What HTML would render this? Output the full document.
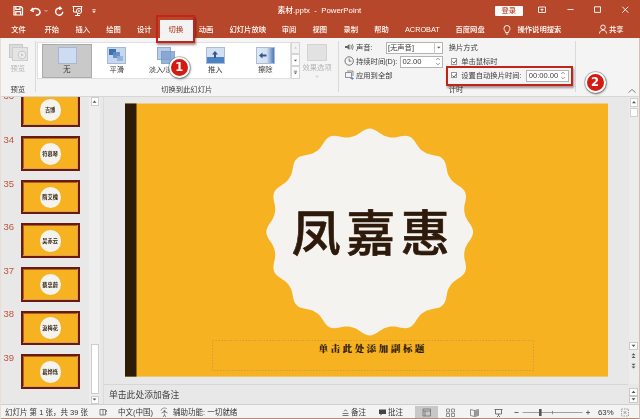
<!DOCTYPE html>
<html><head><meta charset="utf-8">
<style>
*{box-sizing:border-box;margin:0;padding:0}
html,body{width:640px;height:419px;overflow:hidden;background:#e8e8e8;font-family:"Liberation Sans","Noto Sans CJK SC",sans-serif;}
.abs{position:absolute}
#title,#ribbon,#panel,#status{will-change:transform}
#title{left:0;top:0;width:640px;height:38px;background:#b7472a}
.t{position:absolute;color:#fff;font-weight:500;font-size:7.3px;white-space:nowrap;line-height:10px}
.tab{color:#fff}
#ribbon{left:0;top:38px;width:640px;height:58.6px;background:#f4f4f4;border-bottom:1px solid #d6d6d6}
.rl{position:absolute;font-size:7.3px;color:#3a3a3a;white-space:nowrap;line-height:10px}
.gl{position:absolute;font-size:7.5px;color:#333;white-space:nowrap;line-height:10px}
#panel{left:0;top:97px;width:104px;height:307px;background:#e8e8e8}
.num{position:absolute;left:3.5px;font-size:9.5px;margin-top:0.5px;color:#bf5236;line-height:10px}
.th{position:absolute;left:21.3px;width:58.6px;height:34.5px;margin-top:0.3px;background:#f6b221;border:2px solid #6a1a10;box-shadow:inset -1px -1px 0 #dca348,inset 1px 1px 0 #a8641c}
.th i{position:absolute;left:16.6px;top:4.7px;width:21.6px;height:21.6px;border-radius:50%;background:#f4f3ee}
.th b{position:absolute;left:-0.5px;width:100%;top:11.6px;text-align:center;font-size:5.2px;line-height:8px;color:#2b1a0c;font-weight:bold}
#status{left:0;top:404px;width:640px;height:15px;background:#f3f3f3;border-top:1px solid #cfcfcf}
.st{position:absolute;font-size:7.5px;color:#333;top:3px;white-space:nowrap;line-height:10px}
.ann{position:absolute;width:21px;height:21px;border-radius:50%;background:#d51a14;border:2.4px solid #fff;box-shadow:0 0 0 0.7px rgba(90,90,90,.45),0.6px 1.2px 2.2px rgba(0,0,0,.5);color:#fff;font-weight:bold;font-size:11.5px;line-height:17.8px;text-align:center;font-family:"DejaVu Sans","Liberation Sans",sans-serif}
</style></head><body>
<div id="title" class="abs">
<svg class="abs" style="left:0;top:0" width="640" height="38" viewBox="0 0 640 38" fill="none" stroke="#fff" stroke-width="1">
 <path d="M14,6.500 h7 l1.500,1.500 v7 h-8.500 z M15.800,6.500 v2.800 h4.200 v-2.800 M15.800,15 v-3.300 h4.800 v3.300" stroke-width="1.200"/>
 <path d="M33,8 l-2,2.5 l3,1 M31.3,10.3 c2,-2.5 7,-2.5 8.5,0.5 c1,2.5 -1,4.5 -4,4.5" stroke-width="1.4"/>
 <path d="M44.5,10 l1.5,1.5 l1.5,-1.5" stroke-width="0.8" opacity="0.8"/>
 <path d="M60.800,8.400 a3.600,3.600 0 1 0 2,3.300 M59.600,6.600 l1.700,2 l-2.400,0.700" stroke-width="1.400"/>
 <path d="M72.500,6.500 h10 M73.500,6.500 v5.500 h8 v-5.500 M77.500,12 v3 M75,15.500 h5" />
 <circle cx="79" cy="11" r="2.600" fill="#b7472a"/><path d="M78.300,9.800 l2,1.200 l-2,1.200z" fill="#fff" stroke="none"/>
 <path d="M92.300,9.800 h3.400" stroke-width="0.9"/><path d="M92.300,11.300 l1.700,1.700 l1.700,-1.700z" fill="#fff" stroke="none"/>
 <path d="M538.500,7 h7 v5.500 h-7 z M540.500,9.500 h3 M542,8.500 v3" stroke-width="0.9"/>
 <path d="M567.500,9.500 h6" stroke-width="0.9"/>
 <path d="M594.500,6.800 h6 v5.600 h-6 z" stroke-width="0.9"/>
 <path d="M622.300,6.700 l6,6 M628.300,6.700 l-6,6" stroke-width="0.9"/>
 <path d="M507,25.500 a3,3 0 0 1 3,3 c0,1.500 -1.500,2.500 -1.500,4 h-3 c0,-1.500 -1.500,-2.500 -1.500,-4 a3,3 0 0 1 3,-3 z M505.800,34 h2.400" stroke-width="0.9"/>
 <circle cx="603" cy="27.300" r="2.300" stroke-width="0.9"/><path d="M599.500,33.500 c0,-4.500 7,-4.500 7,0" stroke-width="0.9"/>
</svg>
 <div class="t" style="left:277.5px;top:5.5px;font-size:7.8px">素材.pptx&nbsp; -&nbsp; PowerPoint</div>
 <div class="abs" style="left:495px;top:5.5px;width:28px;height:10px;background:#fdfbfa;border-radius:1px"></div>
 <div class="t" style="left:501.5px;top:5.5px;color:#b7472a;font-size:7.3px">登录</div>
 <div class="abs" style="left:160px;top:19.5px;width:32.5px;height:19px;background:#f3f3f3"></div>
 <div class="t tab" style="left:11.2px;top:24.5px;">文件</div>
 <div class="t tab" style="left:44.5px;top:24.5px;">开始</div>
 <div class="t tab" style="left:75.5px;top:24.5px;">插入</div>
 <div class="t tab" style="left:106.2px;top:24.5px;">绘图</div>
 <div class="t tab" style="left:137px;top:24.5px;">设计</div>
 <div class="t tab" style="left:198.7px;top:24.5px;">动画</div>
 <div class="t tab" style="left:229.5px;top:24.5px;">幻灯片放映</div>
 <div class="t tab" style="left:281.7px;top:24.5px;">审阅</div>
 <div class="t tab" style="left:312.5px;top:24.5px;">视图</div>
 <div class="t tab" style="left:343.5px;top:24.5px;">录制</div>
 <div class="t tab" style="left:374.3px;top:24.5px;">帮助</div>
 <div class="t tab" style="left:405px;top:24.5px;">ACROBAT</div>
 <div class="t tab" style="left:455.5px;top:24.5px;">百度网盘</div>
 <div class="t tab" style="left:517.5px;top:24.5px;">操作说明搜索</div>
 <div class="t tab" style="left:609px;top:24.5px;">共享</div>
 <div class="t tab" style="left:168.6px;top:24.5px;color:#b7472a">切换</div>
</div>
<div id="ribbon" class="abs">
 <div class="abs" style="left:9px;top:5.5px;width:14px;height:14px;background:#dcdcdc;border:1px solid #c8c8c8"></div>
 <div class="abs" style="left:12px;top:8.5px;width:15.5px;height:14.5px;background:#e4e4e4;border:1px solid #cdcdcd"></div>
 <svg class="abs" style="left:17px;top:11.500px" width="10" height="10"><circle cx="5" cy="5" r="3.800" fill="#f0f0f0" stroke="#bdbdbd" stroke-width="0.8"/><path d="M4,3.200 l2.800,1.800 l-2.800,1.800z" fill="#c4c4c4"/></svg>
 <div class="rl" style="left:10.5px;top:25.5px;color:#b5b5b5">预览</div>
 <div class="rl" style="left:10.5px;top:46.5px;">预览</div>
 <div class="abs" style="left:35px;top:3px;width:1px;height:51px;background:#dadada"></div>
 <div class="abs" style="left:36.5px;top:3.5px;width:254px;height:37px;background:#fff;border:1px solid #e0e0e0"></div>
 <div class="abs" style="left:42px;top:5.5px;width:49.5px;height:34px;background:#c9c9c9;border:1px solid #ababab"></div>
 <div class="abs" style="left:57.5px;top:8.5px;width:19px;height:17px;background:#cddcf0;border:1px solid #a3b9d6"></div>
 <div class="rl" style="left:63px;top:27.3px;font-size:7.6px">无</div>
 <div class="abs" style="left:107px;top:8.5px;width:19px;height:17px;background:#c6d7ee;border:1px solid #a3b9d8"></div>
 <div class="abs" style="left:109px;top:10.5px;width:7px;height:6px;background:#3f70b0"></div>
 <div class="abs" style="left:113px;top:14px;width:6.500px;height:5.500px;background:#5d8bc6;opacity:.9"></div>
 <div class="abs" style="left:117px;top:17.500px;width:6px;height:5px;background:#8fb0dc;opacity:.9"></div>
 <div class="rl" style="left:109.5px;top:27.3px;">平滑</div>
 <div class="abs" style="left:156.5px;top:9px;width:14px;height:13px;background:#b9cde8;border:1px solid #93add0"></div>
 <div class="abs" style="left:160.5px;top:12.5px;width:14.5px;height:13px;background:#7c9fd0;border:1px solid #6f92c4;opacity:.8"></div>
 <div class="rl" style="left:148.7px;top:27.3px;">淡入/淡出</div>
 <div class="abs" style="left:205.5px;top:8.5px;width:19.5px;height:17px;background:#d3e0f2;border:1px solid #a9bdd8"></div>
 <div class="abs" style="left:206.5px;top:19px;width:17.5px;height:5.5px;background:#4f82c2"></div>
 <svg class="abs" style="left:210px;top:11.500px" width="10" height="9"><path d="M5,1 L8,4.500 H6 V8 H4 V4.500 H2Z" fill="#35588c"/></svg>
 <div class="rl" style="left:208px;top:27.3px;">推入</div>
 <div class="abs" style="left:255.500px;top:8.500px;width:19.500px;height:17px;border:1px solid #a9bdd8;background:linear-gradient(90deg,#dfe8f5 0%,#d3e0f2 58%,#4a78b8 100%)"></div>
 <svg class="abs" style="left:258px;top:12.500px" width="10" height="9"><path d="M1,4.500 L4.500,1.500 V3.500 H8.500 V5.500 H4.500 V7.500Z" fill="#35588c"/></svg>
 <div class="rl" style="left:258px;top:27.3px;">擦除</div>
 <div class="abs" style="left:290.5px;top:3.5px;width:9px;height:12.5px;background:#f3f3f3;border:1px solid #d5d5d5"></div>
 <div class="abs" style="left:290.5px;top:16px;width:9px;height:12px;background:#fdfdfd;border:1px solid #d5d5d5"></div>
 <div class="abs" style="left:290.5px;top:28px;width:9px;height:12.5px;background:#fdfdfd;border:1px solid #d5d5d5"></div>
 <svg class="abs" style="left:290.500px;top:3.500px" width="9" height="37"><path d="M3,6.500 l1.500,-1.500 l1.500,1.500z" fill="#c0c0c0"/><path d="M3,17.800 l1.500,1.600 l1.500,-1.600z" fill="#555"/><path d="M2.800,29.200 h3.400" stroke="#555" stroke-width="0.7"/><path d="M3,30.600 l1.500,1.600 l1.500,-1.600z" fill="#555"/></svg>
 <div class="abs" style="left:307px;top:5.5px;width:19.5px;height:17.5px;background:#e3e2e2;border:1px solid #d3d3d3"></div>
 <div class="rl" style="left:302.5px;top:25px;color:#b5b5b5">效果选项</div>
 <svg class="abs" style="left:314px;top:37px" width="6" height="4"><path d="M1,0.800 l2,2 l2,-2z" fill="#d0d0d0"/></svg>
 <div class="rl" style="left:161.2px;top:46.7px;">切换到此幻灯片</div>
 <div class="abs" style="left:337.6px;top:3px;width:1px;height:51px;background:#dadada"></div>
 <svg class="abs" style="left:344px;top:4px" width="11" height="40" fill="none" stroke="#555" stroke-width="0.8"><path d="M1,4 h2 l2.500,-2 v6 l-2.500,-2 h-2z" fill="#666" stroke="none"/><path d="M6.800,3 q1.200,2 0,4 M8.200,2 q2,3 0,6" stroke-width="0.7"/><circle cx="5.200" cy="19" r="4.200" stroke="#555"/><path d="M5.200,16.500 v2.700 h2.200"/><path d="M1.500,30.500 h6 v5 h-6z M3,29 h6 v5" stroke="#666" stroke-width="0.7"/><path d="M6.500,36.500 l2.500,0 M8,35.200 l1.300,1.300 l-1.300,1.300" stroke="#2f6fb7" stroke-width="0.8"/></svg>
 <div class="rl" style="left:356px;top:5.1px;">声音:</div>
 <div class="abs" style="left:386px;top:3.5px;width:56.5px;height:12.5px;background:#fff;border:1px solid #b4b4b4"></div>
 <div class="abs" style="left:434px;top:3.5px;width:1px;height:12.5px;background:#c8c8c8"></div>
 <svg class="abs" style="left:436px;top:8px" width="6" height="4"><path d="M1,0.800 l1.800,1.800 l1.800,-1.800z" fill="#555"/></svg>
 <div class="rl" style="left:388px;top:5.1px;">[无声音]</div>
 <div class="rl" style="left:356px;top:19.2px;">持续时间(D):</div>
 <div class="abs" style="left:400px;top:17.5px;width:42.5px;height:12px;background:#fff;border:1px solid #b4b4b4"></div>
 <div class="rl" style="left:402.5px;top:19.2px;font-size:7.6px">02.00</div>
 <svg class="abs" style="left:435px;top:19px" width="6" height="9" fill="none" stroke="#666" stroke-width="0.7"><path d="M1.200,3 l1.800,-1.800 l1.800,1.800 M1.200,6 l1.800,1.800 l1.800,-1.800"/></svg>
 <div class="rl" style="left:356px;top:33.1px;">应用到全部</div>
 <div class="rl" style="left:448.7px;top:5.1px;">换片方式</div>
 <div class="abs" style="left:450.5px;top:20px;width:6.5px;height:6.5px;background:#fff;border:1px solid #9a9a9a"></div>
 <svg class="abs" style="left:450.500px;top:20px" width="7" height="7"><path d="M1.500,3.500 l1.500,1.600 l2.600,-3.200" fill="none" stroke="#555" stroke-width="0.9"/></svg>
 <div class="rl" style="left:461.2px;top:19.2px;">单击鼠标时</div>
 <div class="abs" style="left:450.5px;top:33.7px;width:6.5px;height:6.5px;background:#fff;border:1px solid #9a9a9a"></div>
 <svg class="abs" style="left:450.500px;top:33.700px" width="7" height="7"><path d="M1.500,3.500 l1.500,1.600 l2.600,-3.200" fill="none" stroke="#555" stroke-width="0.9"/></svg>
 <div class="rl" style="left:461.2px;top:33.1px;">设置自动换片时间:</div>
 <div class="abs" style="left:526px;top:31.7px;width:43px;height:12px;background:#fff;border:1px solid #b4b4b4"></div>
 <div class="rl" style="left:528.7px;top:33.3px;font-size:7.6px">00:00.00</div>
 <svg class="abs" style="left:560px;top:33px" width="6" height="9" fill="none" stroke="#666" stroke-width="0.7"><path d="M1.200,3 l1.800,-1.800 l1.800,1.800 M1.200,6 l1.800,1.800 l1.800,-1.800"/></svg>
 <div class="rl" style="left:448.7px;top:46.7px;">计时</div>
 <div class="abs" style="left:574.5px;top:3px;width:1px;height:51px;background:#dadada"></div>
 <svg class="abs" style="left:627px;top:50px" width="10" height="6"><path d="M1.500,4.500 l3.500,-3 l3.500,3" fill="none" stroke="#666" stroke-width="0.8"/></svg>
</div>
<div class="abs" style="left:155.500px;top:14.500px;width:39.500px;height:28.500px;border:2.100px solid #c4231a;box-shadow:1px 1.500px 2px rgba(60,0,0,.45)"></div>
<div class="abs" style="left:445.500px;top:66.300px;width:127.500px;height:20.200px;border:2px solid #c4231a;box-shadow:1px 1.500px 2px rgba(60,0,0,.4)"></div>
<div class="ann" style="left:168.700px;top:56.500px">1</div>
<div class="ann" style="left:584.500px;top:71.500px">2</div>
<div id="panel" class="abs" style="overflow:hidden">
 <div class="num" style="top:-6.1px">33</div><div class="th" style="top:-4.6px"><i></i><b>吉博</b></div>
 <div class="num" style="top:37.5px">34</div><div class="th" style="top:39.0px"><i></i><b>符慕琴</b></div>
 <div class="num" style="top:81.1px">35</div><div class="th" style="top:82.6px"><i></i><b>隋艾槐</b></div>
 <div class="num" style="top:124.7px">36</div><div class="th" style="top:126.2px"><i></i><b>吴赤云</b></div>
 <div class="num" style="top:168.3px">37</div><div class="th" style="top:169.8px"><i></i><b>蔡忠蔚</b></div>
 <div class="num" style="top:211.9px">38</div><div class="th" style="top:213.4px"><i></i><b>汲梅花</b></div>
 <div class="num" style="top:255.5px">39</div><div class="th" style="top:257.0px"><i></i><b>葛烨烁</b></div>
 <div class="abs" style="left:89px;top:0;width:11px;height:307px;background:#eeeeee"></div>
 <div class="abs" style="left:90.500px;top:0px;width:8px;height:9px;background:#fff;border:1px solid #cdcdcd"></div>
 <svg class="abs" style="left:90px;top:0px" width="9" height="9"><path d="M2.500,5.800 L4.500,3.600 L6.500,5.800Z" fill="#555"/></svg>
 <div class="abs" style="left:91px;top:246.500px;width:7.500px;height:50px;background:#fff;border:1px solid #cdcdcd"></div>
 <div class="abs" style="left:91px;top:298.500px;width:7.500px;height:8px;background:#fff;border:1px solid #cdcdcd"></div><svg class="abs" style="left:90.300px;top:298px" width="9" height="9"><path d="M2.5,3.5 L4.5,5.5 L6.5,3.5Z" fill="#555"/></svg>
</div>

<div class="abs" style="left:103px;top:97px;width:1px;height:307px;background:#dcdcdc"></div>
<svg class="abs" style="left:0;top:0" width="640" height="419" viewBox="0 0 640 419">
 <rect x="125" y="103.5" width="483" height="273.1" fill="#f6b221"/>
 <rect x="125" y="103.5" width="11.5" height="273.1" fill="#2c1b07"/>
 <path d="M369.7,128.6 L371.7,128.8 L373.7,129.5 L375.7,130.4 L377.6,131.6 L379.5,132.9 L381.3,134.1 L383.1,135.2 L384.9,136.0 L386.7,136.6 L388.6,137.1 L390.5,137.4 L392.4,137.5 L394.4,137.4 L396.4,137.2 L398.6,136.7 L400.8,136.2 L403.0,135.9 L405.2,135.7 L407.3,135.9 L409.3,136.5 L411.1,137.5 L412.7,138.8 L414.1,140.5 L415.4,142.3 L416.6,144.2 L417.9,146.0 L419.1,147.7 L420.5,149.2 L421.9,150.4 L423.5,151.5 L425.1,152.5 L426.8,153.4 L428.7,154.1 L430.7,154.6 L432.9,155.0 L435.1,155.4 L437.3,155.9 L439.4,156.6 L441.2,157.6 L442.8,158.9 L444.1,160.5 L445.1,162.3 L445.8,164.4 L446.3,166.6 L446.7,168.8 L447.1,171.0 L447.6,173.0 L448.3,174.9 L449.2,176.6 L450.2,178.2 L451.3,179.8 L452.5,181.2 L454.0,182.6 L455.7,183.8 L457.5,185.1 L459.4,186.3 L461.2,187.6 L462.9,189.0 L464.2,190.6 L465.2,192.4 L465.8,194.4 L466.0,196.5 L465.8,198.7 L465.5,200.9 L465.0,203.1 L464.5,205.3 L464.3,207.3 L464.2,209.3 L464.3,211.2 L464.6,213.1 L465.1,215.0 L465.7,216.8 L466.5,218.6 L467.6,220.4 L468.8,222.2 L470.1,224.1 L471.3,226.0 L472.2,228.0 L472.9,230.0 L473.1,232.0 L472.9,234.0 L472.2,236.0 L471.3,238.0 L470.1,239.9 L468.8,241.8 L467.6,243.6 L466.5,245.4 L465.7,247.2 L465.1,249.0 L464.6,250.9 L464.3,252.8 L464.2,254.7 L464.3,256.7 L464.5,258.7 L465.0,260.9 L465.5,263.1 L465.8,265.3 L466.0,267.5 L465.8,269.6 L465.2,271.6 L464.2,273.4 L462.9,275.0 L461.2,276.4 L459.4,277.7 L457.5,278.9 L455.7,280.2 L454.0,281.4 L452.5,282.8 L451.3,284.2 L450.2,285.8 L449.2,287.4 L448.3,289.1 L447.6,291.0 L447.1,293.0 L446.7,295.2 L446.3,297.4 L445.8,299.6 L445.1,301.7 L444.1,303.5 L442.8,305.1 L441.2,306.4 L439.4,307.4 L437.3,308.1 L435.1,308.6 L432.9,309.0 L430.7,309.4 L428.7,309.9 L426.8,310.6 L425.1,311.5 L423.5,312.5 L421.9,313.6 L420.5,314.8 L419.1,316.3 L417.9,318.0 L416.6,319.8 L415.4,321.7 L414.1,323.5 L412.7,325.2 L411.1,326.5 L409.3,327.5 L407.3,328.1 L405.2,328.3 L403.0,328.1 L400.8,327.8 L398.6,327.3 L396.4,326.8 L394.4,326.6 L392.4,326.5 L390.5,326.6 L388.6,326.9 L386.7,327.4 L384.9,328.0 L383.1,328.8 L381.3,329.9 L379.5,331.1 L377.6,332.4 L375.7,333.6 L373.7,334.5 L371.7,335.2 L369.7,335.4 L367.7,335.2 L365.7,334.5 L363.7,333.6 L361.8,332.4 L359.9,331.1 L358.1,329.9 L356.3,328.8 L354.5,328.0 L352.7,327.4 L350.8,326.9 L348.9,326.6 L347.0,326.5 L345.0,326.6 L343.0,326.8 L340.8,327.3 L338.6,327.8 L336.4,328.1 L334.2,328.3 L332.1,328.1 L330.1,327.5 L328.3,326.5 L326.7,325.2 L325.3,323.5 L324.0,321.7 L322.8,319.8 L321.5,318.0 L320.3,316.3 L318.9,314.8 L317.5,313.6 L315.9,312.5 L314.3,311.5 L312.6,310.6 L310.7,309.9 L308.7,309.4 L306.5,309.0 L304.3,308.6 L302.1,308.1 L300.0,307.4 L298.2,306.4 L296.6,305.1 L295.3,303.5 L294.3,301.7 L293.6,299.6 L293.1,297.4 L292.7,295.2 L292.3,293.0 L291.8,291.0 L291.1,289.1 L290.2,287.4 L289.2,285.8 L288.1,284.2 L286.9,282.8 L285.4,281.4 L283.7,280.2 L281.9,278.9 L280.0,277.7 L278.2,276.4 L276.5,275.0 L275.2,273.4 L274.2,271.6 L273.6,269.6 L273.4,267.5 L273.6,265.3 L273.9,263.1 L274.4,260.9 L274.9,258.7 L275.1,256.7 L275.2,254.7 L275.1,252.8 L274.8,250.9 L274.3,249.0 L273.7,247.2 L272.9,245.4 L271.8,243.6 L270.6,241.8 L269.3,239.9 L268.1,238.0 L267.2,236.0 L266.5,234.0 L266.3,232.0 L266.5,230.0 L267.2,228.0 L268.1,226.0 L269.3,224.1 L270.6,222.2 L271.8,220.4 L272.9,218.6 L273.7,216.8 L274.3,215.0 L274.8,213.1 L275.1,211.2 L275.2,209.3 L275.1,207.3 L274.9,205.3 L274.4,203.1 L273.9,200.9 L273.6,198.7 L273.4,196.5 L273.6,194.4 L274.2,192.4 L275.2,190.6 L276.5,189.0 L278.2,187.6 L280.0,186.3 L281.9,185.1 L283.7,183.8 L285.4,182.6 L286.9,181.2 L288.1,179.8 L289.2,178.2 L290.2,176.6 L291.1,174.9 L291.8,173.0 L292.3,171.0 L292.7,168.8 L293.1,166.6 L293.6,164.4 L294.3,162.3 L295.3,160.5 L296.6,158.9 L298.2,157.6 L300.0,156.6 L302.1,155.9 L304.3,155.4 L306.5,155.0 L308.7,154.6 L310.7,154.1 L312.6,153.4 L314.3,152.5 L315.9,151.5 L317.5,150.4 L318.9,149.2 L320.3,147.7 L321.5,146.0 L322.8,144.2 L324.0,142.3 L325.3,140.5 L326.7,138.8 L328.3,137.5 L330.1,136.5 L332.1,135.9 L334.2,135.7 L336.4,135.9 L338.6,136.2 L340.8,136.7 L343.0,137.2 L345.0,137.4 L347.0,137.5 L348.9,137.4 L350.8,137.1 L352.7,136.6 L354.5,136.0 L356.3,135.2 L358.1,134.1 L359.9,132.9 L361.8,131.6 L363.7,130.4 L365.7,129.5 L367.7,128.8Z" fill="#f4f3ef"/>
 <text x="373.6" y="251" text-anchor="middle" font-family="'Liberation Sans','Noto Sans CJK SC',sans-serif" font-weight="500" font-size="49" fill="#2e1a0a" stroke="#2e1a0a" stroke-width="0.7" letter-spacing="5.5">凤嘉惠</text>
 <rect x="212.5" y="340.5" width="321" height="30" fill="none" stroke="#b8924a" stroke-width="0.6" stroke-dasharray="1.5,1.5"/>
 <text x="372.6" y="351.9" text-anchor="middle" font-family="'Liberation Serif','Noto Serif CJK SC',serif" font-weight="900" font-size="9.6" fill="#2e1a0a" letter-spacing="2.45">单击此处添加副标题</text>
</svg>
<div class="abs" style="left:104px;top:383.500px;width:524px;height:1px;background:#d6d6d6"></div>
<div class="abs" style="left:109px;top:390px;font-size:8.8px;color:#444;line-height:10px">单击此处添加备注</div>
<div class="abs" style="left:628.500px;top:97px;width:10.500px;height:287px;background:#ececec"></div>
<div class="abs" style="left:630px;top:98px;width:8px;height:8.500px;background:#fff;border:1px solid #d0d0d0"></div>
<div class="abs" style="left:630px;top:108.300px;width:8px;height:9.200px;background:#fff;border:1px solid #d0d0d0"></div>
<div class="abs" style="left:629px;top:342px;width:9px;height:8px;background:#fff;border:1px solid #c9c9c9"></div>
<div class="abs" style="left:629px;top:388px;width:9px;height:7.500px;background:#fff;border:1px solid #c9c9c9"></div>
<div class="abs" style="left:629px;top:395.500px;width:9px;height:7.500px;background:#fff;border:1px solid #c9c9c9"></div>
<svg class="abs" style="left:629px;top:97px" width="9" height="310" fill="#555">
 <path d="M3,6.200 l2,-2.200 l2,2.200z"/>
 <path d="M2.500,247.800 l2,2.200 l2,-2.200z"/>
 <path d="M2.500,258.200 l2,-2 l2,2z M2.500,261 l2,-2 l2,2z"/>
 <path d="M2.500,266.800 l2,2 l2,-2z M2.500,269.600 l2,2 l2,-2z"/>
 <path d="M2.500,296 l2,-2.200 l2,2.200z"/>
 <path d="M2.500,301.200 l2,2.200 l2,-2.200z"/>
</svg>
<div id="status" class="abs">
 <div class="st" style="left:5px">幻灯片 第 1 张，共 39 张</div>
 <div class="st" style="left:118px">中文(中国)</div>
 <div class="st" style="left:173px">辅助功能: 一切就绪</div>
 <div class="st" style="left:351px">备注</div>
 <div class="st" style="left:388px">批注</div>
 <div class="abs" style="left:415px;top:1px;width:23px;height:13px;background:#c8c8c8"></div>
 <div class="st" style="left:598px;font-size:7.800px">63%</div>
 <svg class="abs" style="left:0;top:0" width="640" height="15" viewBox="0 404 640 15" fill="none" stroke="#555" stroke-width="0.800">
  <path d="M100,408.500 h3 v5.500 h-3z M103,408.500 h2.500 v5.500 h-2.500 M106.500,409 v2 M106.500,412.500 v0.800" stroke-width="0.700"/>
  <circle cx="164.500" cy="410.200" r="1" fill="#555" stroke="none"/><path d="M161.500,412 q3,-2.500 6,0 M164.500,412.500 v1.500 M163,416 l1.500,-2 l1.500,2" stroke-width="0.700"/><path d="M160.800,409.500 a4,4 0 0 1 6,-1.800" stroke-width="0.600"/>
  <path d="M342.500,414.500 h6 M342.500,412.500 h6 M344,410.500 l1.500,-1.800 l1.500,1.800" stroke-width="0.800"/>
  <path d="M379,408.500 h7 v4.500 h-4 l-1.500,1.800 v-1.800 h-1.500z" fill="#444" stroke="none"/>
  <path d="M423,408 h7.500 v7 h-7.500z M423,410 h7.500 M425,410 v5" stroke="#666" stroke-width="0.700"/>
  <path d="M446.500,408 h3 v3 h-3z M451.500,408 h3 v3 h-3z M446.500,412.500 h3 v3 h-3z M451.500,412.500 h3 v3 h-3z" stroke="#666" stroke-width="0.700"/>
  <path d="M470.500,408.500 l4,1 l4,-1 v6 l-4,1 l-4,-1z M474.500,409.500 v6" stroke="#666" stroke-width="0.700"/><path d="M475,409.700 l3,-0.700 v5.500 l-3,0.700z" fill="#999" stroke="none"/>
  <path d="M494.500,408.500 h8 M495.500,408.500 v4.500 h6 v-4.500 M498.500,413 v1.500 M497,416 l1.500,-1.500 l1.500,1.500" stroke="#555" stroke-width="0.800"/>
  <path d="M514.500,411.500 h4" stroke-width="0.900"/>
  <path d="M522.500,411.500 h60" stroke="#8a8a8a" stroke-width="0.800"/>
  <path d="M552.500,409.800 v3.400" stroke="#777" stroke-width="0.800"/>
  <rect x="539" y="408" width="2.600" height="7" fill="#555" stroke="none"/>
  <path d="M586,411.500 h4 M588,409.500 v4" stroke-width="0.900"/>
  <path d="M621.500,408 h7 v7 h-7z" stroke="#777" stroke-width="0.700" stroke-dasharray="1.500,1"/><path d="M623.500,410 l3,3 M626.500,410 l-3,3" stroke="#666" stroke-width="0.600"/>
 </svg>
</div>
<div class="abs" style="left:0;top:418px;width:640px;height:1px;background:#b98a7a"></div>
<div class="abs" style="left:639px;top:38px;width:1px;height:381px;background:#d9bdb4"></div>
<div class="abs" style="left:0;top:38px;width:1px;height:381px;background:#ecdcd6"></div>
</body></html>
